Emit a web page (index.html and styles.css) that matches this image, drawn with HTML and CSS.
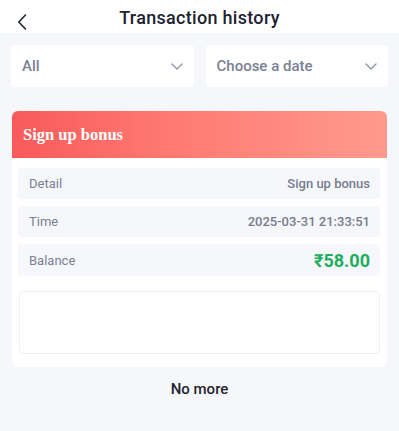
FILE: index.html
```html
<!DOCTYPE html>
<html>
<head>
<meta charset="utf-8">
<link rel="stylesheet" href="styles.css">
</head>
<body>
<header class="topbar">
  <svg class="back" width="10" height="16" viewBox="0 0 10 16"><path d="M8.5 1 L1.8 8 L8.5 15" fill="none" stroke="#1f2430" stroke-width="1.6" stroke-linecap="round" stroke-linejoin="round"/></svg>
  <h1 class="title">Transaction history</h1>
</header>
<main class="page">
  <div class="filters">
    <div class="select"><span>All</span><svg width="12" height="7" viewBox="0 0 12 7"><path d="M1 1 L6 6 L11 1" fill="none" stroke="#8d93a3" stroke-width="1.3" stroke-linecap="round" stroke-linejoin="round"/></svg></div>
    <div class="select"><span>Choose a date</span><svg width="12" height="7" viewBox="0 0 12 7"><path d="M1 1 L6 6 L11 1" fill="none" stroke="#8d93a3" stroke-width="1.3" stroke-linecap="round" stroke-linejoin="round"/></svg></div>
  </div>
  <section class="card">
    <div class="card-head">Sign up bonus</div>
    <div class="card-body">
      <div class="row"><span class="label">Detail</span><span class="value">Sign up bonus</span></div>
      <div class="row"><span class="label">Time</span><span class="value">2025-03-31 21:33:51</span></div>
      <div class="row"><span class="label">Balance</span><span class="amount">₹58.00</span></div>
      <div class="note"></div>
    </div>
  </section>
  <p class="nomore">No more</p>
</main>
</body>
</html>
```
FILE: styles.css
```css
* { box-sizing: border-box; }
html, body { margin: 0; padding: 0; }
body {
  background: #f6f7fb;
  font-family: Roboto, "Noto Sans", sans-serif;
  width: 399px;
  height: 431px;
  overflow: hidden;
}
.topbar {
  position: relative;
  height: 33px;
  background: #ffffff;
  display: flex;
  align-items: center;
  justify-content: center;
}
.back {
  position: absolute;
  left: 17px;
  top: 14px;
}
.title {
  margin: 0;
  font-size: 18px;
  font-weight: 500;
  color: #1d2230;
  letter-spacing: 0.3px;
  padding-top: 2px;
}
.page {
  padding: 12px 11px 0 11px;
}
.filters {
  display: flex;
  gap: 12px;
}
.select {
  flex: 1;
  height: 42px;
  background: #ffffff;
  border-radius: 4px;
  display: flex;
  align-items: center;
  justify-content: space-between;
  padding: 0 11px 0 11px;
  font-size: 15px;
  font-weight: 500;
  color: #7a8194;
}
.card {
  margin: 24px 1px 0 1px;
  background: #ffffff;
  border-radius: 6px;
  overflow: hidden;
}
.card-head {
  height: 47px;
  display: flex;
  align-items: center;
  padding-left: 11px;
  background: linear-gradient(90deg, #f85a5a 0%, #ff7b74 45%, #ff9a8c 100%);
  color: #ffffff;
  font-family: "Liberation Serif", "DejaVu Serif", serif;
  font-weight: bold;
  font-size: 16.5px;
}
.card-body {
  padding: 10px 7px 13px 6px;
  display: flex;
  flex-direction: column;
  gap: 7px;
}
.row {
  height: 31px;
  background: #f6f7fb;
  border-radius: 4px;
  display: flex;
  align-items: center;
  justify-content: space-between;
  padding: 0 10px 0 11px;
  font-size: 13px;
  color: #7b8193;
}
.row:nth-child(3) { height: 32px; }
.label { font-weight: 400; }
.value { font-weight: 500; color: #767c8e; }
.amount {
  font-size: 18px;
  font-weight: 700;
  color: #1fae5c;
}
.note {
  margin-top: 8px;
  height: 63px;
  margin-left: 1px;
  border: 1px solid #f0f0f3;
  border-radius: 5px;
  background: #ffffff;
}
.nomore {
  margin: 13px 0 0 0;
  text-align: center;
  font-size: 15px;
  font-weight: 500;
  color: #1f2430;
}
```
